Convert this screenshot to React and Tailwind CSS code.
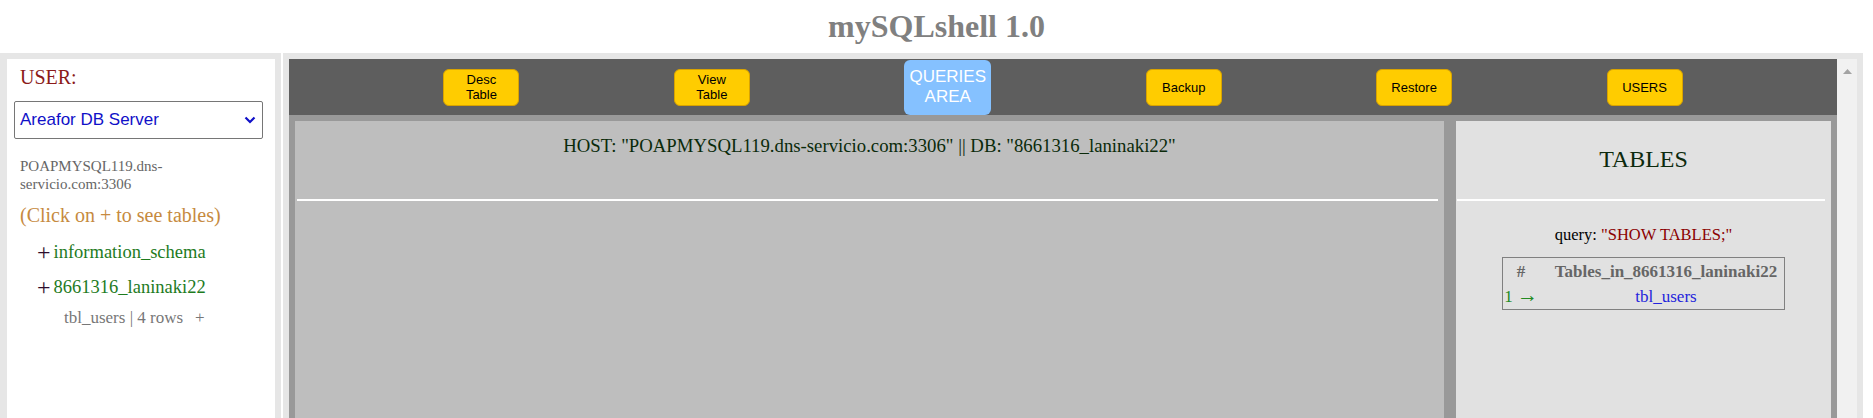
import React from "react";

const tools = [
  { label: ["Desc", "Table"] },
  { label: ["View", "Table"] },
  { label: ["QUERIES", "AREA"], active: true },
  { label: ["Backup"] },
  { label: ["Restore"] },
  { label: ["USERS"] },
];

const databases = ["information_schema", "8661316_laninaki22"];

function ToolButton({ label, active }) {
  if (active) {
    return (
      <button className="w-[87px] h-[55px] rounded-[6px] bg-[#85c1ff] text-white font-['Liberation_Sans',Arial,sans-serif] text-[17px] leading-[20px] flex flex-col items-center justify-center">
        {label.map((l) => (
          <span key={l}>{l}</span>
        ))}
      </button>
    );
  }
  return (
    <button className="w-[76px] h-[37px] rounded-[6px] bg-[#ffcc00] border border-[#d9a300] text-black font-['Liberation_Sans',Arial,sans-serif] text-[13px] leading-[15px] flex flex-col items-center justify-center">
      {label.map((l) => (
        <span key={l}>{l}</span>
      ))}
    </button>
  );
}

function Sidebar() {
  return (
    <aside className="w-[281px] shrink-0 border-t-[6px] border-l-[7px] border-r-[6px] border-[#e6e6e6] bg-white">
      <div className="pl-[13px] pt-[7px] text-[20px] leading-[23px] text-[#8b1a1a]">USER:</div>

      {/* server picker */}
      <div className="ml-[7px] mt-[12px] w-[249px] h-[38px] border border-[#767676] rounded-[2px] flex items-center justify-between pl-[5px] pr-[6px] font-['Liberation_Sans',Arial,sans-serif] text-[17px] text-[#1010c8]">
        <span>Areafor DB Server</span>
        <svg width="12" height="8" viewBox="0 0 12 8">
          <polyline points="1.5,1.5 6,6 10.5,1.5" fill="none" stroke="#1010c8" strokeWidth="2.2" />
        </svg>
      </div>

      <div className="pl-[13px] mt-[18px] text-[15px] leading-[18px] text-[#666]">
        POAPMYSQL119.dns-
        <br />
        servicio.com:3306
      </div>

      <div className="pl-[13px] mt-[11px] text-[20px] leading-[23px] text-[#c68a40]">(Click on + to see tables)</div>

      <div className="mt-[14px] flex flex-col gap-[13px]">
        {databases.map((db) => (
          <div key={db} className="pl-[30px] h-[22px] flex items-center">
            <span className="text-[24px] leading-[22px] text-[#2d0d2d]">+</span>
            <span className="ml-[3px] text-[18.5px] leading-[22px] text-[#1e7b1e]">{db}</span>
          </div>
        ))}
      </div>

      <div className="pl-[57px] mt-[10px] text-[17px] leading-[20px] text-[#777] flex">
        <span>tbl_users | 4 rows</span>
        <span className="ml-[12px]">+</span>
      </div>
    </aside>
  );
}

function TablesPanel() {
  return (
    <div className="w-[375px] shrink-0 bg-[#e1e1e1] flex flex-col">
      <div className="pt-[24px] text-center text-[24px] leading-[28px] text-[#0d2a0d]">TABLES</div>
      <div className="mt-[26px] ml-[1px] mr-[6px] h-[2px] bg-white" />
      <div className="mt-[24px] text-center text-[16.5px] leading-[19px] text-black">
        query: <span className="text-[#8b0000]">"SHOW TABLES;"</span>
      </div>
      <div className="mx-auto mt-[13px] w-[283px] h-[53px] border border-[#808080] py-[1px] grid grid-cols-[36px_1fr] grid-rows-[25px_25px] text-[17px] leading-[25px]">
        <div className="text-center font-bold text-[#666]">#</div>
        <div className="text-center pl-[9px] font-bold text-[#666]">Tables_in_8661316_laninaki22</div>
        <div className="text-center text-[#228b22]">
          1 <span className="text-[21px] leading-[0]">→</span>
        </div>
        <div className="text-center pl-[9px] text-[#2424dc]">tbl_users</div>
      </div>
    </div>
  );
}

export default function App() {
  return (
    <div className="h-screen overflow-hidden flex flex-col bg-white font-['Liberation_Serif','Times_New_Roman',serif]">
      <header className="h-[53px] shrink-0 flex items-center justify-center">
        <h1 className="text-[32px] leading-[37px] font-bold text-[#808080]">mySQLshell 1.0</h1>
      </header>

      <div className="flex-1 min-h-0 flex gap-[2px]">
        <Sidebar />

        <main className="w-[1580px] shrink-0 border-t-[6px] border-x-[6px] border-[#e6e6e6] flex">
          <div className="flex-1 bg-[#999999] flex flex-col">
            {/* toolbar */}
            <div className="h-[56px] shrink-0 bg-[#5e5e5e] flex justify-evenly items-center">
              {tools.map((t) => (
                <ToolButton key={t.label.join(" ")} label={t.label} active={t.active} />
              ))}
            </div>

            <div className="flex-1 flex gap-[12px] px-[6px] pt-[6px]">
              <div className="flex-1 bg-[#bebebe] flex flex-col">
                <div className="pt-[14px] text-center text-[18.75px] leading-[22px] text-[#0a2a0a]">
                  HOST: "POAPMYSQL119.dns-servicio.com:3306" || DB: "8661316_laninaki22"
                </div>
                <div className="mt-[42px] ml-[2px] mr-[6px] h-[2px] bg-white" />
              </div>
              <TablesPanel />
            </div>
          </div>

          {/* scrollbar */}
          <div className="w-[20px] shrink-0 bg-[#f1f1f1] flex justify-center pt-[10px]">
            <svg width="9" height="5" viewBox="0 0 9 5">
              <polygon points="4.5,0 9,5 0,5" fill="#a3a3a3" />
            </svg>
          </div>
        </main>
      </div>
    </div>
  );
}
